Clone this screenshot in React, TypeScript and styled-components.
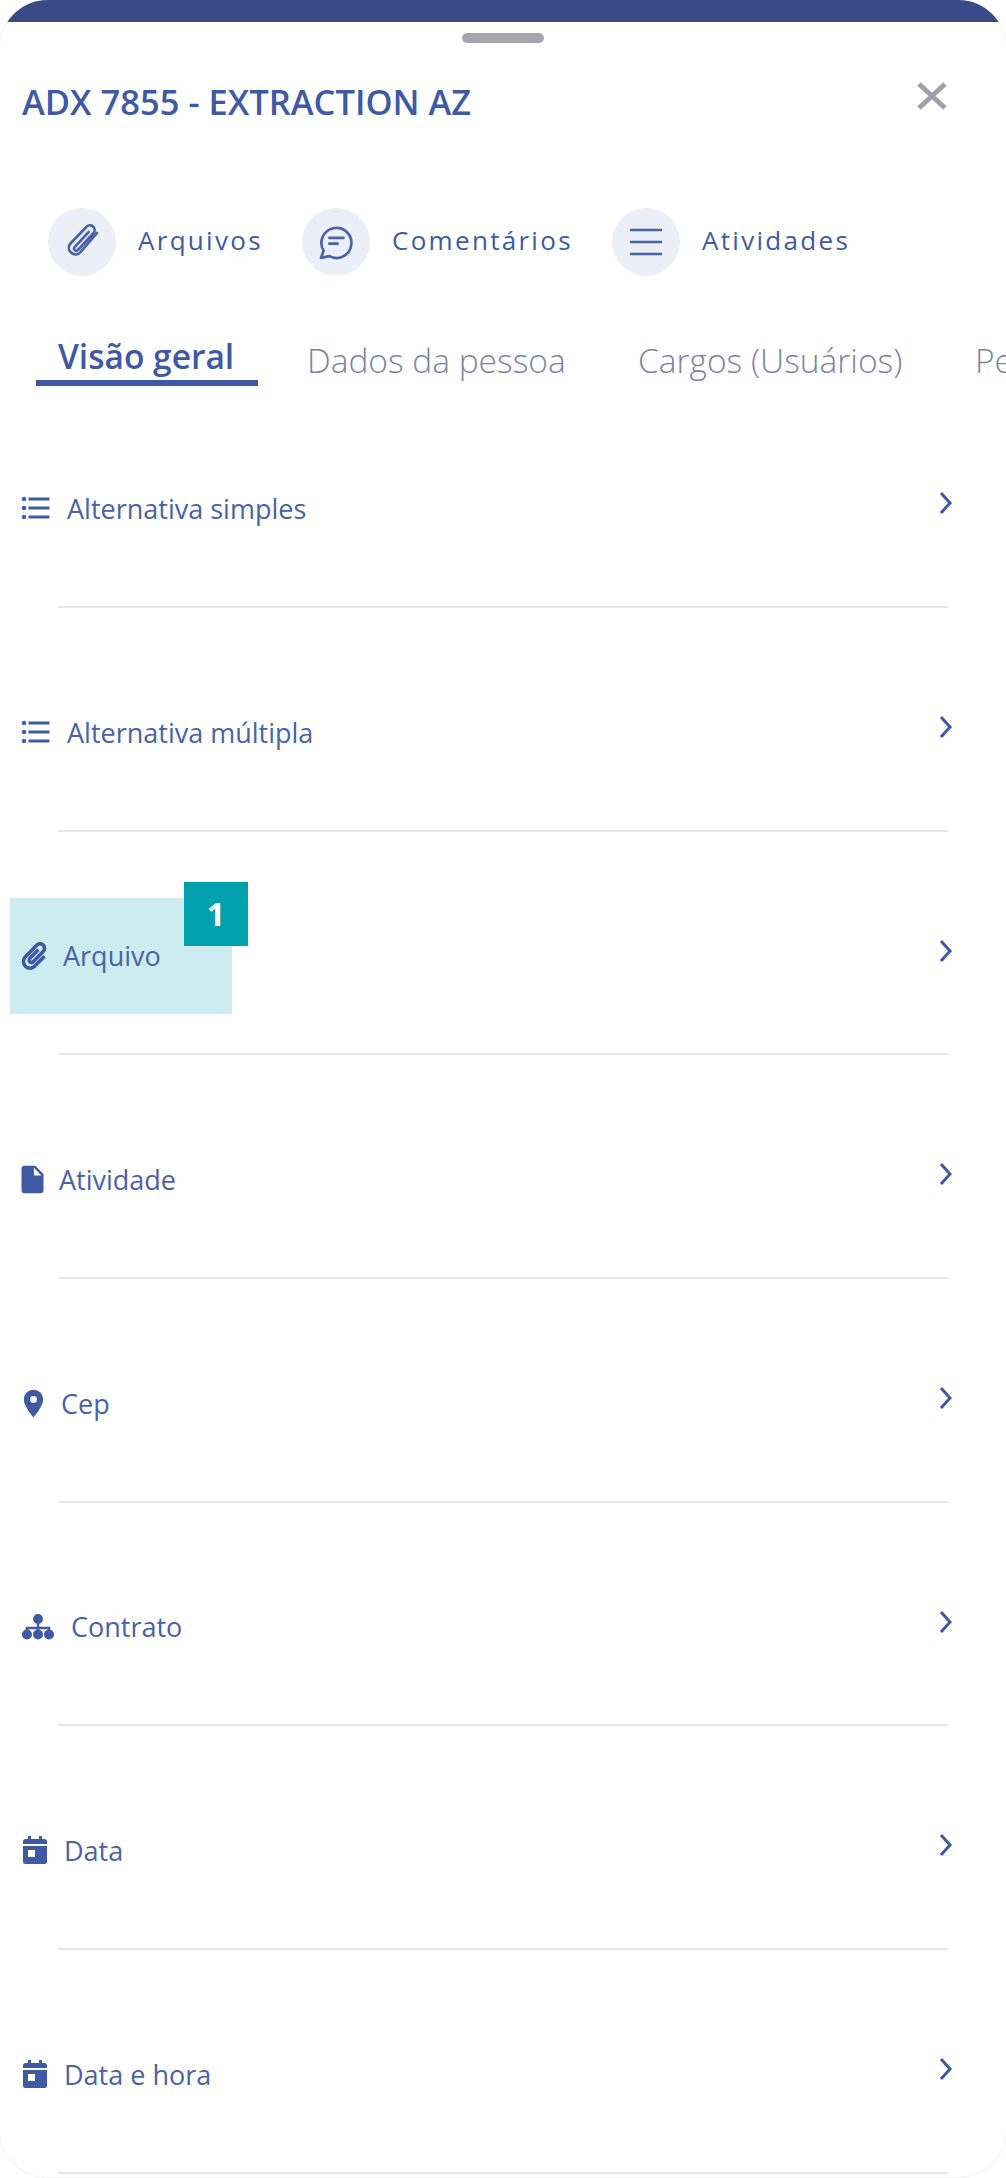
import React from "react";
import styled, { createGlobalStyle } from "styled-components";
import { MdFormatListBulleted, MdInsertDriveFile, MdPlace } from "react-icons/md";
import { FaPaperclip } from "react-icons/fa";

const Global = createGlobalStyle`
  html, body { margin: 0; padding: 0; background: #fff; overflow-x: hidden; }
  * { box-sizing: border-box; }
  body { font-family: "Open Sans", "Liberation Sans", sans-serif; }
`;

const Sheet = styled.div`
  position: relative;
  width: 1008px;
  height: 2178px;
  margin-left: -1px;
  border-radius: 48px;
  border: 1px solid #f0f0f2;
  border-top: none;
  overflow: hidden;
  background: #fff;
`;
const TopBar = styled.div`
  height: 22px;
  background: #394a87;
`;
const Content = styled.div`
  padding: 0 1px;
`;
const HandleRow = styled.div`
  display: flex;
  justify-content: center;
  padding-top: 11px;
`;
const Handle = styled.div`
  width: 82px;
  height: 10px;
  border-radius: 5px;
  background: #a5a5ab;
`;
const Header = styled.div`
  display: flex;
  justify-content: space-between;
  align-items: flex-start;
  padding: 39px 58px 0 21px;
  height: 165px;
`;
const Title = styled.h1`
  margin: 0;
  font-size: 34.5px;
  line-height: 40px;
  font-weight: 600;
  color: #3f5aa5;
  white-space: nowrap;
`;
const CloseIcon = styled.svg`
  width: 30px;
  height: 28px;
  stroke: #a0a0a8;
  stroke-width: 5;
  fill: none;
`;
const Actions = styled.div`
  display: flex;
  padding: 0 0 0 47px;
  height: 68px;
`;
const Action = styled.div<{ $w: number }>`
  display: flex;
  align-items: center;
  width: ${(p) => p.$w}px;
  gap: 22px;
  flex: none;
`;
const Circle = styled.div`
  width: 68px;
  height: 68px;
  flex: none;
  border-radius: 50%;
  background: #eceff7;
  display: flex;
  align-items: center;
  justify-content: center;
`;
const ActionIcon = styled.svg<{ $size: number }>`
  width: ${(p) => p.$size}px;
  height: ${(p) => p.$size}px;
  fill: none;
  stroke: #4a62a8;
  stroke-width: 1.6;
  stroke-linecap: round;
  stroke-linejoin: round;
`;
const ActionLabel = styled.span`
  font-size: 26px;
  letter-spacing: 2.3px;
  color: #3f5aa5;
  white-space: nowrap;
  position: relative;
  top: -2px;
`;
const Tabs = styled.div`
  display: flex;
  margin-top: 65px;
  padding-left: 35px;
  height: 45px;
  align-items: flex-start;
  white-space: nowrap;
`;
const Tab = styled.div<{ $active?: boolean; $w: number }>`
  flex: none;
  width: ${(p) => p.$w}px;
  height: 45px;
  font-size: 33.5px;
  line-height: ${(p) => (p.$active ? 30 : 38)}px;
  font-weight: ${(p) => (p.$active ? 600 : 300)};
  color: ${(p) => (p.$active ? "#3f5aa5" : "#7d83a5")};
  padding-left: ${(p) => (p.$active ? 22 : 0)}px;
  border-bottom: ${(p) => (p.$active ? "6px solid #3f5aa5" : "none")};
  margin-right: ${(p) => (p.$active ? 49 : 0)}px;
`;
const List = styled.div`
  margin-top: -1.7px;
`;
const Row = styled.div`
  position: relative;
  height: 223.7px;
  padding: 110px 0 0 21px;
`;
const RowMain = styled.div`
  display: flex;
  align-items: center;
  gap: 17px;
  height: 28px;
  position: relative;
  z-index: 1;
`;
const IconBox = styled.div<{ $w: number }>`
  width: ${(p) => p.$w}px;
  height: 28px;
  flex: none;
  display: flex;
  align-items: center;
  justify-content: center;
  color: #3f5aa5;
  svg {
    flex: none;
    display: block;
  }
`;
const RowLabel = styled.span`
  font-size: 27px;
  color: #4a62a8;
  white-space: nowrap;
`;
const Chevron = styled.svg`
  position: absolute;
  right: 52px;
  top: 107px;
  width: 14px;
  height: 24px;
  fill: none;
  stroke: #3f5aa5;
  stroke-width: 3;
`;
const Divider = styled.div`
  position: absolute;
  left: 57px;
  right: 57px;
  bottom: 0;
  height: 2px;
  background: #e4e7f3;
`;
const Highlight = styled.div`
  position: absolute;
  left: 9px;
  top: 66px;
  width: 222px;
  height: 116px;
  background: #cdecef;
`;
const Badge = styled.div`
  position: absolute;
  left: 183px;
  top: 50px;
  width: 64px;
  height: 64px;
  background: #00a0af;
  color: #fff;
  font-size: 32px;
  font-weight: 700;
  display: flex;
  align-items: center;
  justify-content: center;
  z-index: 2;
`;

const CalendarIcon = () => (
  <svg width="24" height="28" viewBox="0 0 24 28">
    <path fill="currentColor" d="M5 0h3v3h8V0h3v3h2.500A2.500 2.500 0 0 1 24 5.500V8H0V5.500A2.500 2.500 0 0 1 2.500 3H5zM0 10h24v15.500a2.500 2.500 0 0 1-2.500 2.500h-19A2.500 2.500 0 0 1 0 25.500z" />
    <rect x="5" y="14" width="7" height="7" fill="#fff" />
  </svg>
);
const NetworkIcon = () => (
  <svg width="32" height="26" viewBox="0 0 32 26">
    <circle cx="16" cy="5" r="5" fill="currentColor" />
    <path d="M16 8v12M5 20v-6h22v6" stroke="currentColor" strokeWidth="2.500" fill="none" />
    <circle cx="5" cy="20.500" r="5" fill="currentColor" />
    <circle cx="16" cy="20.500" r="5" fill="currentColor" />
    <circle cx="27" cy="20.500" r="5" fill="currentColor" />
  </svg>
);

const rows = [
  { label: "Alternativa simples", w: 28, icon: <MdFormatListBulleted size={36} /> },
  { label: "Alternativa múltipla", w: 28, icon: <MdFormatListBulleted size={36} /> },
  { label: "Arquivo", w: 24, icon: <FaPaperclip size={28} />, marked: true },
  { label: "Atividade", w: 20, icon: <MdInsertDriveFile size={33} /> },
  { label: "Cep", w: 22, icon: <MdPlace size={33} /> },
  { label: "Contrato", w: 32, icon: <NetworkIcon /> },
  { label: "Data", w: 25, icon: <CalendarIcon /> },
  { label: "Data e hora", w: 25, icon: <CalendarIcon /> },
];

export default function App() {
  return (
    <Sheet>
      <Global />
      <TopBar />
      <Content>
        <HandleRow><Handle /></HandleRow>
        <Header>
          <Title>ADX 7855 - EXTRACTION AZ</Title>
          <CloseIcon viewBox="0 0 30 28"><path d="M2 2 28 26M28 2 2 26" /></CloseIcon>
        </Header>
        <Actions>
          <Action $w={254}>
            <Circle>
              <ActionIcon $size={40} viewBox="0 0 24 24">
                <path d="M21 6.500 11 18.200a4 4 0 0 1-6.200-5L14.600 3a2.800 2.800 0 0 1 4.300 3.600L9.600 16.800a1.300 1.300 0 0 1-2-1.700L16 6" />
              </ActionIcon>
            </Circle>
            <ActionLabel>Arquivos</ActionLabel>
          </Action>
          <Action $w={310}>
            <Circle>
              <ActionIcon $size={40} viewBox="0 0 24 24">
                <path d="M3 21.500l1.600-4.200A9 9 0 1 1 8 20.500z" />
                <path d="M8 9.500h8.500M8 13h5" />
              </ActionIcon>
            </Circle>
            <ActionLabel>Comentários</ActionLabel>
          </Action>
          <Action $w={300}>
            <Circle>
              <ActionIcon $size={36} viewBox="0 0 36 36">
                <path d="M3 6h30M3 18h30M3 30h30" strokeWidth="2.500" />
              </ActionIcon>
            </Circle>
            <ActionLabel>Atividades</ActionLabel>
          </Action>
        </Actions>
        <Tabs>
          <Tab $active $w={222}>Visão geral</Tab>
          <Tab $w={331}>Dados da pessoa</Tab>
          <Tab $w={337}>Cargos (Usuários)</Tab>
          <Tab $w={200}>Pessoa</Tab>
        </Tabs>
        <List>
          {rows.map((r) => (
            <Row key={r.label}>
              {r.marked && <Highlight />}
              {r.marked && <Badge>1</Badge>}
              <RowMain>
                <IconBox $w={r.w}>{r.icon}</IconBox>
                <RowLabel>{r.label}</RowLabel>
              </RowMain>
              <Chevron viewBox="0 0 14 24"><path d="M2 2l9 10-9 10" /></Chevron>
              <Divider />
            </Row>
          ))}
        </List>
      </Content>
    </Sheet>
  );
}
